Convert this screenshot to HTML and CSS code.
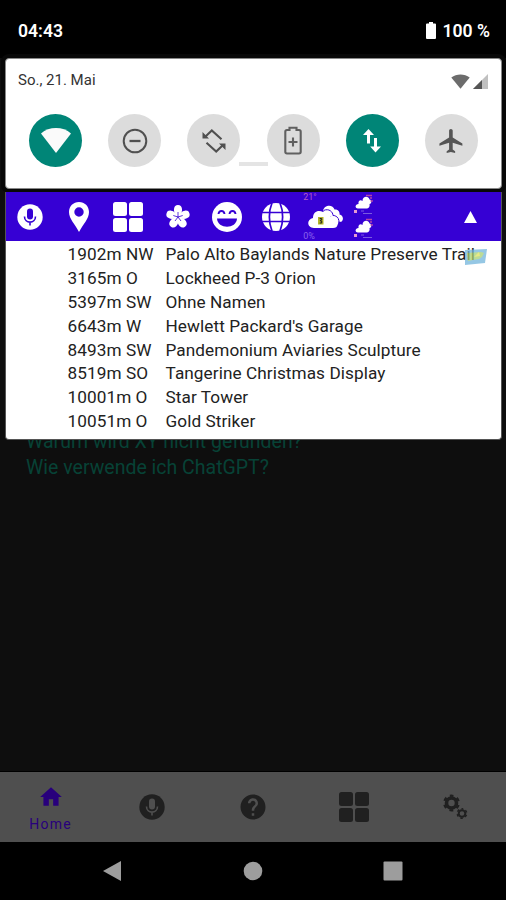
FILE: index.html
```html
<!DOCTYPE html>
<html lang="de">
<head>
    <meta charset="UTF-8">
    <meta name="viewport" content="width=device-width, initial-scale=1.0">
    <title>Home</title>
    <link rel="stylesheet" href="styles.css">
</head>
<body>

    <div class="phone">
        <main class="app">
            <a class="faq">Warum wird XY nicht gefunden?</a>
            <a class="faq">Wie verwende ich ChatGPT?</a>
        </main>

        <nav class="tabs">
            <div class="tab active">
                <svg width="26" height="26" viewBox="0 0 24 24"><path d="M10 20v-6h4v6h5v-8h3L12 3 2 12h3v8z"/></svg>
                <span>Home</span>
            </div>
            <div class="tab">
                <svg width="26" height="26" viewBox="0 0 26 26"><circle cx="13" cy="13" r="12.7"/><rect x="10" y="4.5" width="6" height="11" rx="3" fill="#4f4f4f"/><path d="M7.500 12.500c0 7.500 11 7.500 11 0M13 18v3.500" fill="none" stroke="#4f4f4f" stroke-width="1.600"/></svg>
            </div>
            <div class="tab">
                <svg width="30" height="30" viewBox="0 0 24 24"><path d="M12 2C6.480 2 2 6.480 2 12s4.480 10 10 10 10-4.480 10-10S17.520 2 12 2zm1 17h-2v-2h2v2zm2.070-7.750l-.9.920C13.450 12.900 13 13.500 13 15h-2v-.5c0-1.100.45-2.100 1.170-2.830l1.240-1.260c.37-.36.590-.86.590-1.410 0-1.100-.9-2-2-2s-2 .9-2 2H8c0-2.210 1.790-4 4-4s4 1.790 4 4c0 .88-.36 1.680-.93 2.250z"/></svg>
            </div>
            <div class="tab">
                <svg width="30" height="30" viewBox="0 0 30 30"><rect width="14" height="14" rx="2.500"/><rect x="16" width="14" height="14" rx="2.500"/><rect y="16" width="14" height="14" rx="2.500"/><rect x="16" y="16" width="14" height="14" rx="2.500"/></svg>
            </div>
            <div class="tab">
                <svg width="26" height="26" viewBox="0 0 26 26">
                    <g fill="none" stroke="#202020">
                        <circle cx="9.500" cy="9" r="5" stroke-width="3.600"/>
                        <circle cx="9.500" cy="9" r="7.300" stroke-width="2.200" stroke-dasharray="3.820 3.820" stroke-dashoffset="1.910" transform="rotate(-90 9.500 9)"/>
                        <circle cx="20" cy="19.500" r="3.300" stroke-width="2"/>
                        <circle cx="20" cy="19.500" r="4.700" stroke-width="1.500" stroke-dasharray="2.460 2.460" stroke-dashoffset="1.230" transform="rotate(-90 20 19.500)"/>
                    </g>
                </svg>
            </div>
        </nav>

        <div class="system-nav">
            <svg width="20" height="22" viewBox="0 0 20 22"><path d="M0 11L18 1v20z"/></svg>
            <svg width="20" height="22" viewBox="0 0 20 22"><circle cx="10" cy="11" r="9.300"/></svg>
            <svg width="20" height="22" viewBox="0 0 20 22"><rect x="0.500" y="1.500" width="19" height="19" rx="1"/></svg>
        </div>

        <!-- notification shade on top of the app -->
        <div class="shade">
            <header class="status">
                <span>04:43</span>
                <span class="battery">
                    <svg width="10" height="17" viewBox="0 0 10 17"><path d="M3 0h4v1.500h2q1 0 1 1V16q0 1-1 1H1q-1 0-1-1V2.500q0-1 1-1h2z" fill="#fff"/></svg>
                    100 %
                </span>
            </header>

            <section class="quick">
                <div class="quick-top">
                    <span>So., 21. Mai</span>
                    <span class="signals">
                        <svg width="19" height="15" viewBox="0 0 19 15"><path d="M0.300 3.500C5.500-.6 13.500-.6 18.700 3.500L9.500 14.800z" fill="#6c6c6c"/></svg>
                        <svg width="15" height="15" viewBox="0 0 15 15"><path d="M15 0v15H0z" fill="#c0c0c0"/><path d="M9 6v9H0z" fill="#555"/></svg>
                    </span>
                </div>
                <div class="tiles">
                    <div class="tile on">
                        <svg width="30" height="25" viewBox="0 0 30 25"><path d="M0 5.500C8-1.800 22-1.800 30 5.500L15 25z" fill="#fafafa"/></svg>
                    </div>
                    <div class="tile">
                        <svg width="26" height="26" viewBox="0 0 26 26" fill="none" stroke="#505050" stroke-width="2"><circle cx="13" cy="13" r="11.300"/><path d="M7.500 13h11" stroke-width="2.300"/></svg>
                    </div>
                    <div class="tile">
                        <svg width="26" height="26" viewBox="0 0 26 26" fill="none" stroke="#505050" stroke-width="2.100"><path d="M20.500 11.300L10.800 2.500 4 9M5.500 14.700L15.200 23.500 22 17"/><path d="M1.500 4v6.500H8zM24.500 22v-6.500H18z" fill="#505050" stroke="none"/></svg>
                    </div>
                    <div class="tile">
                        <svg width="18" height="29" viewBox="0 0 18 29" fill="none" stroke="#606060" stroke-width="2.100"><path d="M5.500 4V1.800h7V4H15q1.700 0 1.700 1.700v20.100q0 1.700-1.700 1.700H3q-1.700 0-1.700-1.700V5.700Q1.300 4 3 4z"/><path d="M9 11.500v9M4.500 16h9"/></svg>
                    </div>
                    <div class="tile on">
                        <svg width="18" height="24" viewBox="0 0 18 24"><path d="M5.500 0l5.500 6H7v8.500H4V6H0zM12.500 23.500l-5.300-6H11V9h3v8.500h4z" fill="#fff"/></svg>
                    </div>
                    <div class="tile">
                        <svg width="29" height="30" viewBox="0 0 24 24"><path d="M21 16v-2l-8-5V3.500c0-.83-.67-1.500-1.500-1.500S10 2.670 10 3.500V9l-8 5v2l8-2.500V19l-2 1.500V22l3.500-1 3.500 1v-1.500L13 19v-5.500l8 2.500z" fill="#555"/></svg>
                    </div>
                </div>
                <div class="handle"></div>
            </section>

            <section class="widget">
                <div class="toolbar">
                    <div class="tool">
                        <svg width="26" height="26" viewBox="0 0 26 26"><circle cx="13" cy="13" r="12.700"/><rect x="10" y="4.500" width="6" height="11" rx="3" fill="#3600d4"/><path d="M7.500 12.500c0 7.500 11 7.500 11 0M13 18v3.500" fill="none" stroke="#3600d4" stroke-width="1.600"/></svg>
                    </div>
                    <div class="tool">
                        <svg width="20" height="30" viewBox="0 0 20 30"><path d="M10 0C4.300 0 0 4.300 0 10c0 7 6 12 10 20 4-8 10-13 10-20 0-5.700-4.300-10-10-10zm0 5.300a4.700 4.700 0 1 1 0 9.400 4.700 4.700 0 0 1 0-9.400z"/></svg>
                    </div>
                    <div class="tool">
                        <svg width="30" height="30" viewBox="0 0 30 30"><rect width="14" height="14" rx="2.500"/><rect x="16" width="14" height="14" rx="2.500"/><rect y="16" width="14" height="14" rx="2.500"/><rect x="16" y="16" width="14" height="14" rx="2.500"/></svg>
                    </div>
                    <div class="tool">
                        <svg width="26" height="26" viewBox="-13 -13 26 26">
                            <defs><path id="petal" d="M0 0C-2.500-2-4.600-5-3.900-8.500-3.500-10.800-2.500-12 0-12 2.500-12 3.500-10.800 3.900-8.500 4.600-5 2.500-2 0 0z"/></defs>
                            <use href="#petal"/>
                            <use href="#petal" transform="rotate(72)"/>
                            <use href="#petal" transform="rotate(144)"/>
                            <use href="#petal" transform="rotate(216)"/>
                            <use href="#petal" transform="rotate(288)"/>
                            <path d="M0 0v-5M0 0l4.700-1.500M0 0l3 4M0 0l-3 4M0 0l-4.700-1.500" stroke="#3600d4" stroke-width=".8"/>
                        </svg>
                    </div>
                    <div class="tool">
                        <svg width="30" height="30" viewBox="0 0 30 30"><circle cx="15" cy="15" r="15"/><path d="M5 16.500h20c-.5 11-19.500 11-20 0z" fill="#3600d4"/><path d="M6.500 12c.5-4 5.500-4 6 0M17.500 12c.5-4 5.500-4 6 0" fill="none" stroke="#3600d4" stroke-width="1.900"/></svg>
                    </div>
                    <div class="tool">
                        <svg width="28" height="28" viewBox="0 0 28 28"><circle cx="14" cy="14" r="14"/><path d="M0 9.500h28M0 18.500h28M10 0C6.500 8 6.500 20 10 28M18 0c3.500 8 3.500 20 0 28" fill="none" stroke="#3600d4" stroke-width="1.700"/></svg>
                    </div>
                    <div class="tool weather">
                        <span class="temp">21°</span>
                        <svg width="36" height="24" viewBox="0 0 36 24"><path d="M15 6C16-.5 25-1 26.500 4.500c4-.5 5.500 3 5 5 4 1 4.500 5.500 1.500 7.500L28 15z"/><path d="M15.500 5.500C21 3 25 7 25 10.500c3 0 5.500 2 6 5.500" fill="none" stroke="#3600d4" stroke-width="1"/><path d="M6 23C-1.500 23-1.500 14 5 13 5 7 10 4.500 15 7c4-2 8 1 7.500 4.500C29 10 32 15 29.500 20 29 22 28 23 25 23z"/><path d="M10 12h5.500v7.500H10z" fill="#b5b528"/><path d="M11.700 13.500h2v1.500h-1.300v1h1.300v2h-2" fill="none" stroke="#222" stroke-width="1"/></svg>
                        <span class="rain">0%</span>
                    </div>
                    <div class="tool forecast">
                        <svg width="20" height="24" viewBox="0 0 20 24"><path d="M4 15.500C.5 15.500 1 11 4.500 11 4 7.500 6.500 6.500 8.500 8c0-5 6-5.500 7-1.500 2.500.5 2.500 4 0 4.500.5 2.500-.5 4.500-3.500 4.500z"/><path d="M0 18.500h3" stroke="#e59ad0" stroke-width="3"/><path d="M12 2.500h6M16 5h2M16.500 8H19" stroke="#b446a8" stroke-width="1.500"/><path d="M7 18h3M9 20.500h9" stroke="#7a5be0" stroke-width="1.200"/></svg>
                        <svg width="20" height="24" viewBox="0 0 20 24"><path d="M4 15.500C.5 15.500 1 11 4.500 11 4 7.500 6.500 6.500 8.500 8c0-5 6-5.500 7-1.500 2.500.5 2.500 4 0 4.500.5 2.500-.5 4.500-3.500 4.500z"/><path d="M0 18.500h3" stroke="#e59ad0" stroke-width="3"/><path d="M12 2.500h6M16 5h2M16.500 8H19" stroke="#b446a8" stroke-width="1.500"/><path d="M7 18h3M9 20.500h9" stroke="#7a5be0" stroke-width="1.200"/></svg>
                    </div>
                    <div class="tool collapse">
                        <svg width="13" height="12" viewBox="0 0 13 12"><path d="M6.500 0L13 12H0z"/></svg>
                    </div>
                </div>

                <div class="places">
                    <span>1902m NW</span><span>Palo Alto Baylands Nature Preserve Trail</span>
                    <span>3165m O</span><span>Lockheed P-3 Orion</span>
                    <span>5397m SW</span><span>Ohne Namen</span>
                    <span>6643m W</span><span>Hewlett Packard's Garage</span>
                    <span>8493m SW</span><span>Pandemonium Aviaries Sculpture</span>
                    <span>8519m SO</span><span>Tangerine Christmas Display</span>
                    <span>10001m O</span><span>Star Tower</span>
                    <span>10051m O</span><span>Gold Striker</span>
                    <svg class="map" width="23" height="16" viewBox="0 0 23 16"><path d="M1 1l22-1-2 14-20 2z" fill="#72b5dc"/><path d="M3 4l14-1 3 1-2 4-3 2-6 1-5 1z" fill="#a7cf72"/><path d="M10 8l5-5 1 4z" fill="#dfe35c"/></svg>
                </div>
            </section>
        </div>
    </div>

</body>
</html>
```
FILE: styles.css
```css
* {
    box-sizing: border-box;
}

body {
    margin: 0;
    background: #000;
    font-family: Roboto, sans-serif;
}

svg {
    display: block;
    flex-shrink: 0;
}

.phone {
    position: relative;
    display: flex;
    flex-direction: column;
    width: 506px;
    height: 900px;
    overflow: hidden;
    background: #000;
}

.app {
    flex: 1;
    display: flex;
    flex-direction: column;
    padding: 429px 26px 0;
    background: #0e0e0e;
}

.faq {
    color: #074236;
    font-size: 19.5px;
    line-height: 26px;
    white-space: nowrap;
}

.tabs {
    display: grid;
    grid-template-columns: repeat(5, 1fr);
    height: 71px;
    border-top: 1px solid #000;
    background: #4f4f4f;
}

.tab {
    display: flex;
    flex-direction: column;
    align-items: center;
    justify-content: center;
    fill: #202020;
}

.active {
    padding-top: 2px;
    color: #28007c;
    fill: #28007c;
    font-size: 14px;
    line-height: 17px;
    letter-spacing: 1.3px;
}

.active span {
    margin-top: 6px;
}

.system-nav {
    display: flex;
    justify-content: center;
    gap: 120px;
    height: 58px;
    padding-top: 18px;
    fill: #9d9d9d;
}

.shade {
    position: absolute;
    top: 0;
    left: 0;
    width: 100%;
}

.status {
    display: flex;
    justify-content: space-between;
    align-items: center;
    height: 58px;
    padding: 3px 16px 0 18px;
    background: #000;
    color: #fff;
    font-size: 17.6px;
    font-weight: 600;
}

.battery {
    display: flex;
    align-items: center;
    gap: 6px;
}

.quick {
    height: 131px;
    margin: 0 4px 0 5px;
    padding: 12px 11px 0;
    border: 1px solid #888;
    border-radius: 4px;
    background: #fff;
    box-shadow: 0 0 0 4px #080808;
}

.quick-top {
    display: flex;
    justify-content: space-between;
    height: 43px;
    padding: 0 2px 0 1px;
    color: #333;
    font-size: 15px;
    line-height: 18px;
}

.signals {
    display: flex;
    gap: 3px;
    padding-top: 3px;
}

.tiles {
    display: flex;
    justify-content: space-between;
    padding: 0 12px;
}

.tile {
    display: flex;
    align-items: center;
    justify-content: center;
    width: 53px;
    height: 53px;
    border-radius: 50%;
    background: #dcdcdc;
}

.on {
    background: #008577;
}

.handle {
    width: 29px;
    height: 4px;
    margin: -5px auto 0;
    background: #e4e4e4;
}

.widget {
    height: 248px;
    margin: 3px 4px 0 5px;
    border: 1px solid #555;
    border-top: 0;
    border-radius: 0 0 4px 4px;
    background: #fff;
}

.toolbar {
    display: flex;
    height: 49px;
    background: #3600d4;
    fill: #fff;
}

.tool {
    display: flex;
    align-items: center;
    justify-content: center;
    width: 49.2px;
    padding: 1px 1px 0 0;
}

.weather {
    flex-direction: column;
    justify-content: space-between;
    padding: 0;
    font-size: 9px;
    line-height: 10px;
}

.weather span {
    align-self: flex-start;
    padding-left: 2px;
}

.temp {
    color: #b05cc4;
}

.rain {
    color: #8a63ec;
}

.forecast {
    flex-direction: column;
    align-items: flex-start;
    padding-left: 4px;
}

.collapse {
    margin-left: auto;
    width: 61px;
}

.places {
    position: relative;
    display: grid;
    grid-template-columns: 98px 1fr;
    grid-auto-rows: 23.9px;
    padding: 2px 0 0 61.5px;
    color: #222;
    font-size: 17.2px;
    line-height: 23.5px;
    letter-spacing: 0.07px;
    white-space: nowrap;
}

.map {
    position: absolute;
    top: 8px;
    right: 14px;
    opacity: 0.75;
}
```
